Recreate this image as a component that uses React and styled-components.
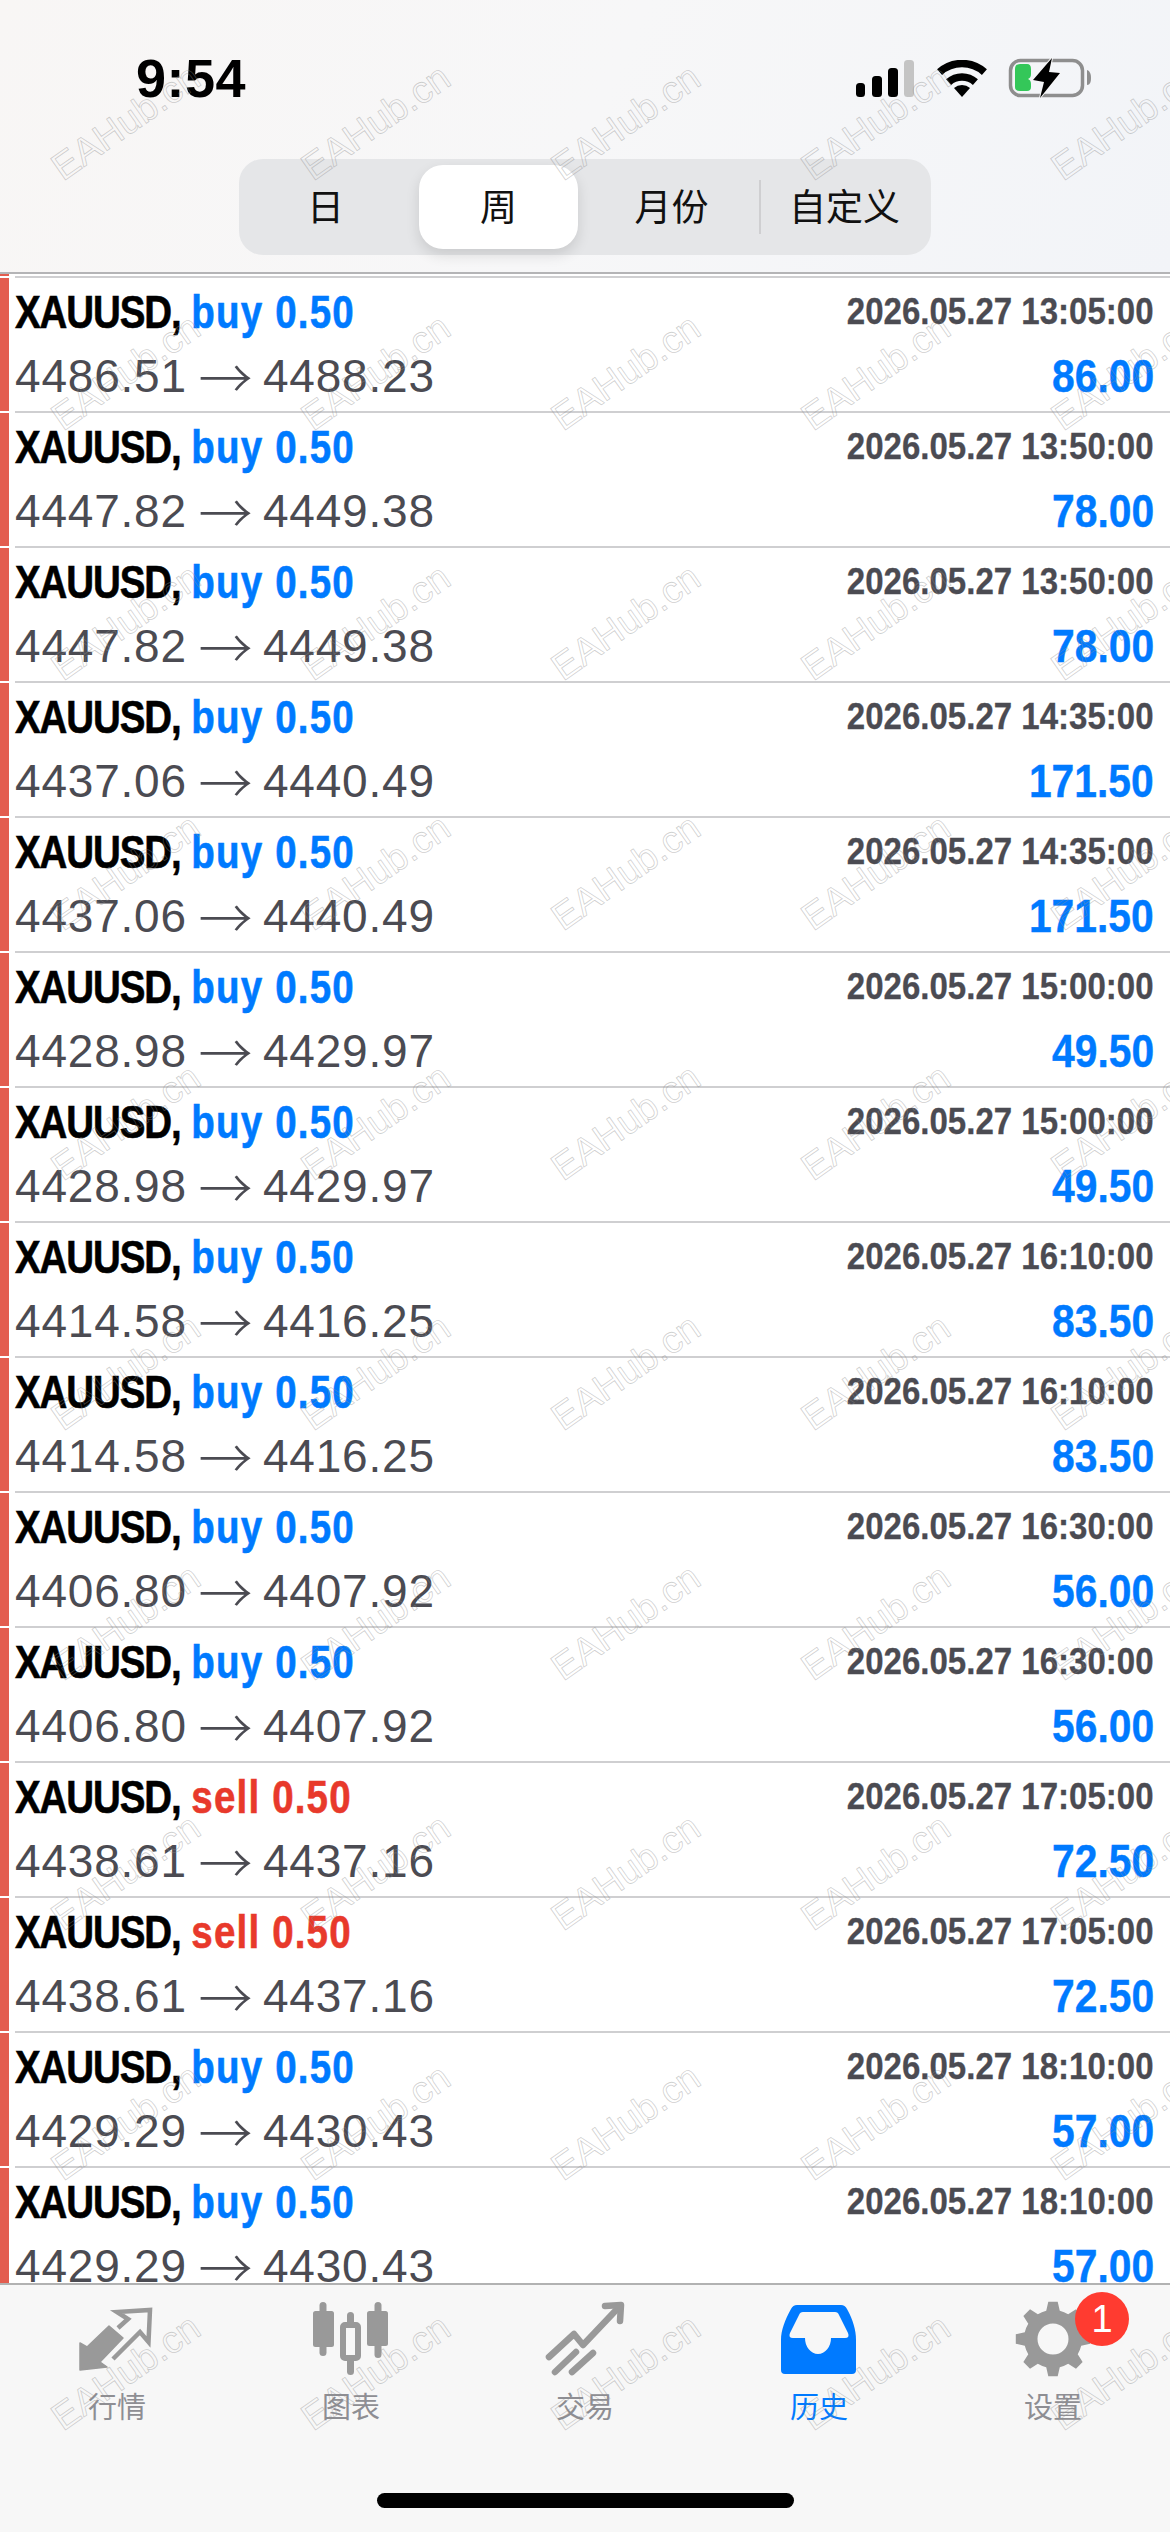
import React from "react";
import styled, { createGlobalStyle } from "styled-components";

const Global = createGlobalStyle`
  html, body { margin: 0; padding: 0; background: #fff; }
  * { box-sizing: border-box; }
`;
const SANS = `"Liberation Sans", Arial, sans-serif`;
const CJK = `"Liberation Sans", "Noto Sans CJK SC", sans-serif`;

const Page = styled.div`
  position: relative; width: 1170px; height: 2532px; overflow: hidden;
  display: flex; flex-direction: column; background: #fff; font-family: ${SANS};
`;
const Header = styled.header`
  height: 274px; flex: none; border-bottom: 2px solid #b4b4b6;
  background: linear-gradient(115deg, #f8f6f5 0%, #f7f7f8 50%, #f2f4f8 100%);
`;
const StatusBar = styled.div`
  height: 159px; padding: 48px 75px 0 136px;
  display: flex; justify-content: space-between; align-items: flex-start;
`;
const Time = styled.div`
  font-size: 54px; line-height: 60px; font-weight: 700; color: #000; letter-spacing: 0.5px;
`;
const StatusIcons = styled.div`
  height: 60px; display: flex; align-items: center;
  svg { display: block; }
`;
const SignalIcon = styled.svg`margin-right: 23px;`;
const WifiIcon = styled.svg`margin-right: 18px;`;
const Segmented = styled.div`
  width: 692px; height: 96px; margin-left: 239px; border-radius: 24px; background: #e5e6e8;
  display: grid; grid-template-columns: repeat(4, 173px); position: relative;
`;
const Segment = styled.div`
  margin: 6px 7px; padding-bottom: 5px; border-radius: 24px;
  display: flex; align-items: center; justify-content: center;
  font-family: ${CJK}; font-size: 37px; font-weight: 400; color: #111; white-space: nowrap;
  background: ${(p) => (p.$active ? "#fff" : "transparent")};
  box-shadow: ${(p) => (p.$active ? "0 6px 14px rgba(0,0,0,.12)" : "none")};
`;
const SegDivider = styled.div`
  position: absolute; left: 520px; top: 21px; width: 2px; height: 54px; background: #cfcfd1;
`;
const List = styled.main`
  flex: 1; min-height: 0; overflow: hidden;
`;
const TopCap = styled.div`
  display: flex; height: 4px;
`;
const CapBar = styled.div`width: 9px; height: 2px; background: #e35d4f; margin-right: 6px;`;
const CapLine = styled.div`flex: 1; border-bottom: 2px solid #cfcfd1;`;
const Row = styled.div`
  display: flex; height: 135px;
`;
const Bar = styled.div`
  width: 9px; height: 133px; background: #e35d4f; margin-right: 6px; flex: none;
`;
const RowBody = styled.div`
  flex: 1; min-width: 0; padding: 2px 16px 0 0; border-bottom: 2px solid #cfcfd1;
`;
const Line = styled.div`
  height: 64px; display: flex; justify-content: space-between; align-items: center; white-space: nowrap;
`;
const Title = styled.div`
  font-size: 46px; line-height: 64px; font-weight: 700; color: #000;
  -webkit-text-stroke: 0.6px currentColor;
  transform: scaleX(.837); transform-origin: left center;
`;
const Symbol = styled.span`letter-spacing: -1.3px;`;
const Side = styled.span`
  letter-spacing: 1.4px; color: ${(p) => (p.$sell ? "#e8392b" : "#007aff")};
`;
const Stamp = styled.div`
  font-size: 37px; line-height: 64px; font-weight: 700; color: #4b4b52;
  -webkit-text-stroke: 0.3px currentColor;
  transform: scaleX(.893); transform-origin: right center;
`;
const Price = styled.div`
  font-size: 46px; line-height: 64px; color: #4b4b52; display: flex; align-items: center;
  letter-spacing: 0.8px;
`;
const Arrow = styled.span`
  font-family: "Noto Sans CJK SC", sans-serif; font-weight: 300; font-size: 54px; line-height: 64px;
  margin: 0 9px 0 11px; width: 56px; text-align: center;
`;
const Profit = styled.div`
  font-size: 46px; line-height: 64px; font-weight: 700; color: #007aff;
  -webkit-text-stroke: 0.4px currentColor;
  transform: scaleX(.887); transform-origin: right center;
`;
const TabBar = styled.nav`
  flex: none; height: 249px; background: #f7f7f7; border-top: 2px solid #b2b2b2;
  padding-top: 15px; display: flex; flex-direction: column; align-items: center;
`;
const Tabs = styled.div`
  width: 100%; display: grid; grid-template-columns: repeat(5, 234px);
`;
const Tab = styled.div`
  position: relative; display: flex; flex-direction: column; align-items: center;
  color: ${(p) => (p.$active ? "#007aff" : "#8e8e93")};
  svg { display: block; }
`;
const TabLabel = styled.div`
  margin-top: 8px; font-family: ${CJK}; font-size: 29px; line-height: 40px;
`;
const Badge = styled.div`
  position: absolute; left: 139px; top: -8px; width: 54px; height: 54px; border-radius: 50%;
  background: #ff3b30; color: #fff; font-size: 38px; line-height: 54px; text-align: center;
`;
const HomeIndicator = styled.div`
  margin-top: 65px; width: 417px; height: 15px; border-radius: 8px; background: #000;
`;
const Watermarks = styled.div`
  position: absolute; left: 45px; top: -72px; pointer-events: none;
  display: grid; grid-template-columns: repeat(5, 250px); grid-auto-rows: 250px;
`;
const Mark = styled.div`
  margin: 175px 0 0 -5px; width: 171px; height: 38px;
  font-size: 38px; line-height: 38px; white-space: nowrap;
  color: transparent; -webkit-text-stroke: 0.8px rgba(140,140,140,.42);
  transform: rotate(-35deg);
`;

const rows = [
  ["buy", "2026.05.27 13:05:00", "4486.51", "4488.23", "86.00"],
  ["buy", "2026.05.27 13:50:00", "4447.82", "4449.38", "78.00"],
  ["buy", "2026.05.27 13:50:00", "4447.82", "4449.38", "78.00"],
  ["buy", "2026.05.27 14:35:00", "4437.06", "4440.49", "171.50"],
  ["buy", "2026.05.27 14:35:00", "4437.06", "4440.49", "171.50"],
  ["buy", "2026.05.27 15:00:00", "4428.98", "4429.97", "49.50"],
  ["buy", "2026.05.27 15:00:00", "4428.98", "4429.97", "49.50"],
  ["buy", "2026.05.27 16:10:00", "4414.58", "4416.25", "83.50"],
  ["buy", "2026.05.27 16:10:00", "4414.58", "4416.25", "83.50"],
  ["buy", "2026.05.27 16:30:00", "4406.80", "4407.92", "56.00"],
  ["buy", "2026.05.27 16:30:00", "4406.80", "4407.92", "56.00"],
  ["sell", "2026.05.27 17:05:00", "4438.61", "4437.16", "72.50"],
  ["sell", "2026.05.27 17:05:00", "4438.61", "4437.16", "72.50"],
  ["buy", "2026.05.27 18:10:00", "4429.29", "4430.43", "57.00"],
  ["buy", "2026.05.27 18:10:00", "4429.29", "4430.43", "57.00"],
];

const gearPath = (() => {
  const cx = 45, cy = 39, R = 37.5, r = 29, n = 8;
  const pt = (rad, a) => `${(cx + rad * Math.cos(a)).toFixed(2)} ${(cy + rad * Math.sin(a)).toFixed(2)}`;
  let d = "";
  for (let i = 0; i < n; i++) {
    const a = (i / n) * Math.PI * 2 - Math.PI / 2;
    const s = (Math.PI * 2) / n;
    d += `${i ? "L" : "M"}${pt(r, a - s * 0.3)} L${pt(R, a - s * 0.16)} L${pt(R, a + s * 0.16)} L${pt(r, a + s * 0.3)} `;
    d += `A${r} ${r} 0 0 1 ${pt(r, a + s * 0.7)} `;
  }
  return d + `Z M${cx + 15.5} ${cy} A15.5 15.5 0 1 0 ${cx - 15.5} ${cy} A15.5 15.5 0 1 0 ${cx + 15.5} ${cy} Z`;
})();

const MarketIcon = () => (
  <svg width="90" height="80" viewBox="0 0 90 80">
    <path d="M8 70 V43 L15 47 L37 26 L51 38 L28 62 L35 67 Z" fill="#999" stroke="#999" strokeWidth="1.5" strokeLinejoin="round" />
    <path d="M46 28 L56 19 L45 12 L78 10 L76.5 42 L68 32 L41 59" fill="none" stroke="#999" strokeWidth="4.5" />
  </svg>
);
const ChartIcon = () => (
  <svg width="90" height="80" viewBox="0 0 90 80" fill="#999">
    <rect x="13.5" y="2" width="7" height="54" rx="3.5" />
    <rect x="7" y="11" width="21" height="36" rx="2.5" />
    <rect x="41" y="12" width="7" height="63" rx="3.5" />
    <rect x="37" y="25" width="15" height="33" rx="2" fill="#f7f7f7" stroke="#999" strokeWidth="6" />
    <rect x="68.5" y="2" width="7" height="56" rx="3.5" />
    <rect x="61" y="11" width="21" height="35" rx="2.5" />
  </svg>
);
const TradeIcon = () => (
  <svg width="90" height="80" viewBox="0 0 90 80" fill="none" stroke="#999" strokeWidth="6.5" strokeLinecap="round" strokeLinejoin="round">
    <path d="M9 57 L34 34 L43 45 L79 7" />
    <path d="M65 6 L81 5 L80 21" />
    <path d="M15 72 L36 52" />
    <path d="M32 72 L53 53" />
  </svg>
);
const HistoryIcon = () => (
  <svg width="90" height="80" viewBox="0 0 90 80">
    <path
      fillRule="evenodd"
      fill="#007aff"
      d="M23 5 H67 Q71 5 73 9 C79 20 82 30 82 40 V70 Q82 74 78 74 H11 Q7 74 7 70 V40 C7 30 11 20 17 9 Q19 5 23 5 Z
         M29 12 Q26 12 25 15 L16 33 Q14 38 19 38 H31 A13 16 0 0 0 57 38 H71 Q76 38 74 33 L65 15 Q64 12 61 12 Z"
    />
  </svg>
);
const GearIcon = () => (
  <svg width="90" height="80" viewBox="0 0 90 80">
    <path fillRule="evenodd" fill="#999" d={gearPath} />
  </svg>
);

const tabs = [
  ["行情", MarketIcon],
  ["图表", ChartIcon],
  ["交易", TradeIcon],
  ["历史", HistoryIcon, true],
  ["设置", GearIcon, false, 1],
];

export default function App() {
  return (
    <Page>
      <Global />
      <Header>
        <StatusBar>
          <Time>9:54</Time>
          <StatusIcons>
            <SignalIcon width="58" height="37" viewBox="0 0 58 37">
              <rect x="0" y="23" width="9" height="14" rx="3.5" fill="#000" />
              <rect x="16" y="16" width="10" height="21" rx="3.5" fill="#000" />
              <rect x="32" y="8" width="10" height="29" rx="3.5" fill="#000" />
              <rect x="48" y="0" width="10" height="37" rx="3.5" fill="#c4c4c4" />
            </SignalIcon>
            <WifiIcon width="50" height="37" viewBox="0 0 50 37">
              <path d="M2.6 12.1 A33.5 33.5 0 0 1 47.4 12.1" fill="none" stroke="#000" strokeWidth="7.5" />
              <path d="M11.6 22.1 A20 20 0 0 1 38.4 22.1" fill="none" stroke="#000" strokeWidth="7.5" />
              <path d="M25 37 L17 28 A12 12 0 0 1 33 28 Z" fill="#000" />
            </WifiIcon>
            <svg width="90" height="46" viewBox="0 0 90 46">
              <rect x="5.5" y="5.5" width="72" height="35" rx="10" fill="none" stroke="#8e8e8e" strokeWidth="3.5" />
              <path d="M82 15 C85 16 86 19 86 23 C86 27 85 30 82 30 Z" fill="#8e8e8e" />
              <path d="M15 9 H22 Q26 9 26 14 V19 Q26 23 23 24 Q26 25 26 29 V32 Q26 36 22 36 H15 Q10 36 10 32 V14 Q10 9 15 9 Z" fill="#34c759" />
              <path d="M47 3 L28 25 L39 27 L35 43 L55 18 L44 17 Z" fill="#000" stroke="#f6f6f7" strokeWidth="2" paintOrder="stroke" />
            </svg>
          </StatusIcons>
        </StatusBar>
        <Segmented>
          <Segment>日</Segment>
          <Segment $active>周</Segment>
          <Segment>月份</Segment>
          <Segment>自定义</Segment>
          <SegDivider />
        </Segmented>
      </Header>
      <List>
        <TopCap>
          <CapBar />
          <CapLine />
        </TopCap>
        {rows.map(([side, date, from, to, profit], i) => (
          <Row key={i}>
            <Bar />
            <RowBody>
              <Line>
                <Title>
                  <Symbol>XAUUSD,</Symbol> <Side $sell={side === "sell"}>{side} 0.50</Side>
                </Title>
                <Stamp>{date}</Stamp>
              </Line>
              <Line>
                <Price>
                  {from}
                  <Arrow>→</Arrow>
                  {to}
                </Price>
                <Profit>{profit}</Profit>
              </Line>
            </RowBody>
          </Row>
        ))}
      </List>
      <TabBar>
        <Tabs>
          {tabs.map(([label, Icon, active, badge]) => (
            <Tab key={label} $active={active}>
              <Icon />
              <TabLabel>{label}</TabLabel>
              {badge ? <Badge>{badge}</Badge> : null}
            </Tab>
          ))}
        </Tabs>
        <HomeIndicator />
      </TabBar>
      <Watermarks>
        {Array.from({ length: 50 }, (_, i) => (
          <div key={i}>
            <Mark>EAHub.cn</Mark>
          </div>
        ))}
      </Watermarks>
    </Page>
  );
}
